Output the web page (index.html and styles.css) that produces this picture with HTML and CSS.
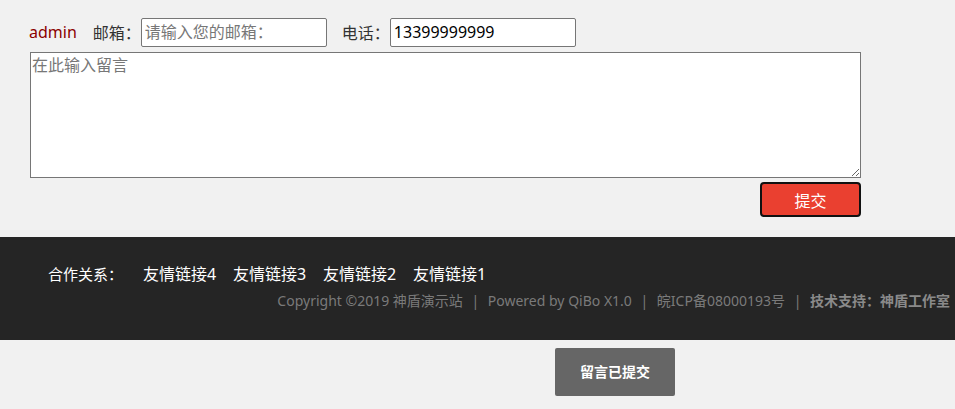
FILE: index.html
```html
<!DOCTYPE html>
<html lang="zh-CN">
<head>
    <meta charset="UTF-8">
    <title>留言</title>
    <link rel="stylesheet" href="styles.css">
</head>
<body>
    <div class="liuyan">
        <div class="fila">
            <span class="usuario">admin</span>
            <label class="etiqueta">邮箱：</label>
            <input class="campo" type="text" placeholder="请输入您的邮箱：">
            <label class="etiqueta etiqueta-tel">电话：</label>
            <input class="campo" type="text" value="13399999999">
        </div>
        <textarea class="mensaje" placeholder="在此输入留言"></textarea>
        <div class="acciones">
            <button class="btn-enviar">提交</button>
        </div>
    </div>

    <div class="pie">
        <div class="enlaces">
            <span class="titulo">合作关系：</span>
            <a href="#">友情链接4</a>
            <a href="#">友情链接3</a>
            <a href="#">友情链接2</a>
            <a href="#">友情链接1</a>
        </div>
        <div class="copy">
            Copyright ©2019 神盾演示站 <span class="sep">|</span> Powered by QiBo X1.0 <span class="sep">|</span> 皖ICP备08000193号 <span class="sep">|</span> <b>技术支持：神盾工作室</b>
        </div>
    </div>

    <div class="aviso">留言已提交</div>
</body>
</html>
```

FILE: styles.css
```css
body {
    margin: 0;
    background-color: #f1f1f1;
    font-family: "Noto Sans", "Noto Sans CJK SC", sans-serif;
    color: #333;
}

.liuyan {
    padding: 17px 0 20px 30px;
    width: 831px;
}

.fila {
    display: flex;
    align-items: center;
    height: 30px;
    font-size: 16px;
}

.usuario {
    color: #8b0000;
    margin-left: -1px;
    margin-right: 16px;
}

.etiqueta {
    color: #333;
}

.etiqueta-tel {
    margin-left: 15px;
}

.campo {
    box-sizing: border-box;
    width: 186px;
    height: 29px;
    border: 1px solid #767676;
    border-radius: 2px;
    padding: 0 3px;
    font-family: "Noto Sans", "Noto Sans CJK SC", sans-serif;
    font-size: 16px;
    color: #000;
    background: #fff;
}

.campo::placeholder {
    color: #777;
}

.mensaje {
    display: block;
    box-sizing: border-box;
    width: 831px;
    height: 126px;
    margin-top: 5px;
    border: 1px solid #767676;
    padding: 2px 1px;
    font-family: "Noto Sans", "Noto Sans CJK SC", sans-serif;
    font-size: 16px;
    line-height: 20px;
    background: #fff;
}

.mensaje::placeholder {
    color: #777;
}

.acciones {
    display: flex;
    justify-content: flex-end;
    margin-top: 4px;
}

.btn-enviar {
    width: 101px;
    height: 35px;
    background-color: #ea4030;
    color: #fff;
    border: 2px solid #111;
    border-radius: 4px;
    font-family: "Noto Sans", "Noto Sans CJK SC", sans-serif;
    font-size: 16px;
    cursor: pointer;
}

.pie {
    background-color: #252525;
    height: 103px;
    box-sizing: border-box;
    padding: 25px 5px 0 48px;
}

.enlaces {
    font-size: 15px;
    line-height: 24px;
    color: #fff;
}

.titulo {
    margin-right: 16px;
}

.enlaces a {
    color: #fff;
    text-decoration: none;
    font-size: 16px;
    margin-right: 13px;
}

.copy {
    text-align: right;
    font-size: 14px;
    line-height: 20px;
    color: #7a7a7a;
    margin-top: 5px;
    white-space: nowrap;
}

.copy .sep {
    margin: 0 5px;
}

.copy b {
    color: #8a8a8a;
}

.aviso {
    position: fixed;
    left: 555px;
    top: 348px;
    width: 120px;
    height: 48px;
    line-height: 48px;
    text-align: center;
    background-color: #666;
    color: #fff;
    font-size: 14px;
    font-weight: bold;
    border-radius: 2px;
}
```
